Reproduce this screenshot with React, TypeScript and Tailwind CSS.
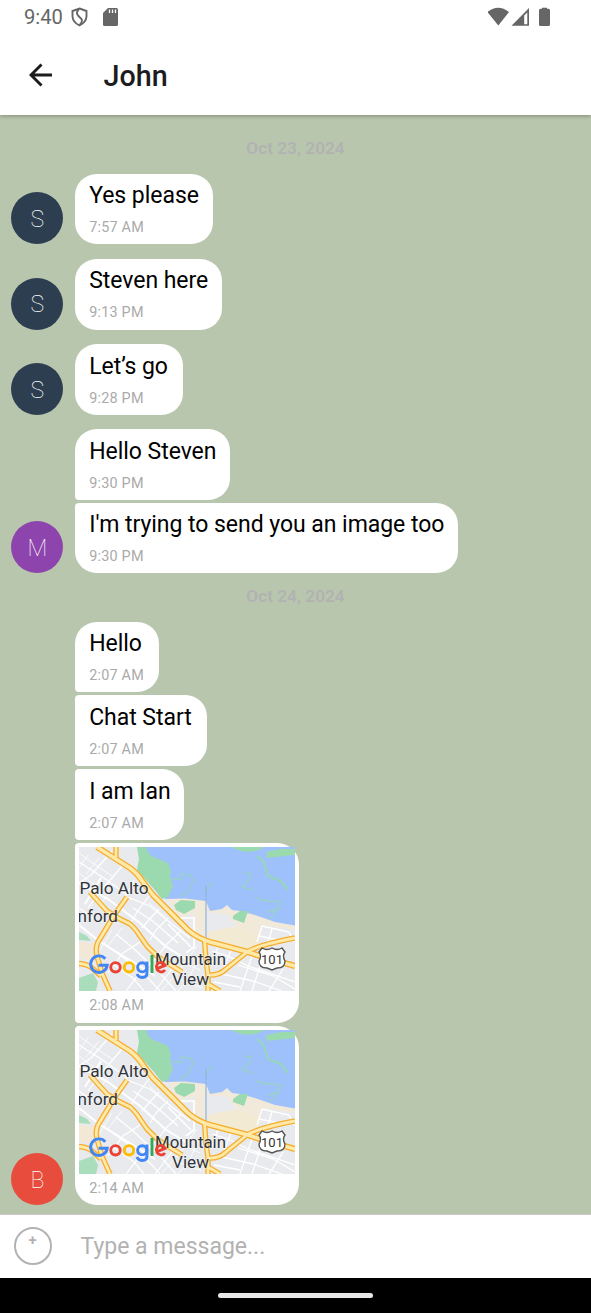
import React from "react";

const time = "text-[14.4px] leading-[17px] tracking-[0.22px] text-[#aaaaaa]";

function MapImage() {
  return (
    <svg viewBox="79 847 216 144" className="block h-[144px] w-[216px]" fontFamily="Roboto, sans-serif">
      <rect x="79" y="847" width="216" height="144" fill="#e8eaed" />
      <path d="M165 893L208 896L240 905L295 918V940L262 946L243 947L205 936L192 930L176 914Z" fill="#f1e9d9" />
      <path d="M208 931L232 927L262 934L258 944L243 951L210 941Z" fill="#f3ead3" />
      <path d="M79 942L98 944L97 962L79 958Z" fill="#f3e8d5" />
      <path d="M205 912L228 914L236 926L207 932ZM262 925L295 930V939L258 945ZM180 917L195 914V933L185 924Z" fill="#e8eaed" />
      <path d="M140 847H295V925.5L275 922L255 915L240 911L232 910L227 905L222 909L210 911L206 901L185 898.5L165 899L155 872Z" fill="#9fc1fb" />
      <path d="M137 847H146Q148 856 156 858L168 863L171 871L170 878L173 886L168 897L162 899L154 889L145 879L137 870L139 859Z" fill="#9bd9ae" />
      <path d="M174 905L181 900L195 901V908L184 914L176 910Z" fill="#9bd9ae" />
      <path d="M231 847Q248 856 263 848V847ZM266 852L281 849H295V855L267 858ZM233 916L240 911L248 911L244 923L233 919Z" fill="#9bd9ae" />
      <path d="M79 932L87 936L91 941L79 940ZM79 978L93 973L98 982L96 991H79Z" fill="#a9ddbb" />
      <g fill="none" stroke="#96d6bb" strokeWidth="2.2">
        <path d="M257 856L263 861L268 876L281 881L288 890" />
        <path d="M171 879H181V874L190 875L194 880L187 892L181 896M205 892L212 882M244 873L251 874L249 880L242 887L253 890M255 897L261 900L281 902L276 911L270 919M267 912L280 909" strokeWidth="1.3" strokeOpacity=".85" />
      </g>
      <path d="M206 898V940M206 897V886" stroke="#91b4da" strokeWidth="1.2" />
      <g fill="none" stroke="#fff" strokeWidth="2">
        <path d="M79 883L108 899L140 923L165 946L189 961M79 925L99 941L141 967L155 976M101 878L85 904" />
        <path d="M180 918H194V947L186 953M168 924L191 947" strokeWidth="1.7" />
      </g>
      <g fill="none" stroke="#fff" strokeWidth="1.2">
        <path d="M79 862L104 878L126 894M112 851L91 875L79 883M122 866L105 886L88 908M134 880L126 896M79 908L97 921M149 896L137 912L130 924M159 909L148 921L142 928M168 918L156 930L150 940M181 931L166 945L158 956M127 897L150 906L172 924L190 938M133 908L154 922L178 943M116 934L133 948L160 973L176 991M104 944L124 958L150 980L160 991M140 942L123 953L108 973M156 958L140 973L126 991M172 969L155 991M110 962L133 978L144 991" />
      </g>
      <g fill="none" stroke="#fff" strokeWidth=".8">
        <path d="M79 853L97 866L112 876M79 873L96 886M88 855L79 868M99 858L86 874M113 888L99 906M112 930L100 950M122 928L107 947M149 903L165 917M197 946L183 966L162 990M199 957L189 978L178 991M180 961L200 970M175 978L202 988" />
      </g>
      <g fill="none" stroke="#fff" strokeWidth="1.3">
        <path d="M262 926L289 932L294 942M262 926L257 942M272 929L268 942M259 936L284 941M212 951L228 956L248 966L295 982M218 947L211 966M231 950L224 968M252 956L240 991M262 960L252 991M283 969L269 991M222 974L253 981L282 991M238 965L273 976L295 989M214 982L240 987" />
      </g>
      {[["#f5ad2c", 5.4], ["#ffe9a8", 2.8]].map(([c, w]) => (
        <g key={c} fill="none" stroke={c} strokeWidth={w} strokeLinejoin="round">
          <path d="M116 847V857M90 892L97 900L107 911L118 918L130 924Q135 928 140 936L147 946L158 957L182 972M127 897L115 914L98 942Q95 948 97 956L102 973L110 991M79 963.5Q87 964 92 968L101 976M204.5 940L206 960L208 975V991M207 975Q219 976 226 969L247 952Q258 945 295 938M208 984L220 991" />
          <path d="M97 847L130 868Q137 873 143 882L153 895L175 917L188 930Q197 938 210 942L248 952L263 957L295 966" strokeWidth={Number(w) + 0.7} />
        </g>
      ))}
      <g fill="#30343a" fontSize="17.3" stroke="#fff" strokeWidth="1.5" paintOrder="stroke" strokeOpacity=".4">
        <text x="79.5" y="894" textLength="69" lengthAdjust="spacingAndGlyphs">Palo Alto</text>
        <text x="77.5" y="922" textLength="40.5" lengthAdjust="spacingAndGlyphs">nford</text>
        <text x="155" y="965" textLength="71" lengthAdjust="spacingAndGlyphs">Mountain</text>
        <text x="172" y="985" textLength="37" lengthAdjust="spacingAndGlyphs">View</text>
      </g>
      <path d="M262 948Q267 951 272 948Q277 951 282 948L285 952Q282 956 285 961Q285 968 277 968L272 970L267 968Q259 968 259 961Q262 956 259 952Z" fill="#fff" stroke="#555" strokeWidth="1.4" />
      <text x="272" y="964" textAnchor="middle" fontSize="13" fill="#333">101</text>
      <g fill="none" strokeWidth="2.9">
        <path d="M105.3 958.8A8.3 8.3 0 1 0 107.2 965.2H98.5" stroke="#4285f4" />
        <circle cx="115.5" cy="967.3" r="4.7" stroke="#ea4335" />
        <circle cx="129" cy="967.3" r="4.7" stroke="#fbbc04" />
        <path d="M147 961.5V973Q147 977.5 142 977.5Q138.5 977.5 137 974" stroke="#4285f4" />
        <circle cx="142.2" cy="967.3" r="4.6" stroke="#4285f4" />
        <path d="M152 955V973" stroke="#34a853" />
        <path d="M157 968.7L165 965.4Q163.5 962.4 160.5 962.4A4.8 4.8 0 1 0 165 970" stroke="#ea4335" />
      </g>
    </svg>
  );
}

type Msg = { text?: string; at: string; avatar?: string; color?: string; shape: string; width: string; gap: string };

const single = "rounded-[21.6px]";
const first = "rounded-[21.6px] rounded-bl-[4px]";
const middle = "rounded-[21.6px] rounded-l-[4px]";
const last = "rounded-[21.6px] rounded-tl-[4px]";

const oct23: Msg[] = [
  { text: "Yes please", at: "7:57 AM", avatar: "S", color: "bg-[#2c3e50]", shape: single, width: "w-[138.5px]", gap: "mb-[14.6px]" },
  { text: "Steven here", at: "9:13 PM", avatar: "S", color: "bg-[#2c3e50]", shape: single, width: "w-[147px]", gap: "mb-[14.6px]" },
  { text: "Let’s go", at: "9:28 PM", avatar: "S", color: "bg-[#2c3e50]", shape: single, width: "w-[107.8px]", gap: "mb-[14.6px]" },
  { text: "Hello Steven", at: "9:30 PM", shape: first, width: "w-[155.2px]", gap: "mb-[2.9px]" },
  { text: "I'm trying to send you an image too", at: "9:30 PM", avatar: "M", color: "bg-[#8e44ad]", shape: last, width: "w-[383.5px]", gap: "" },
];
const oct24: Msg[] = [
  { text: "Hello", at: "2:07 AM", shape: first, width: "w-[83.7px]", gap: "mb-[3.2px]" },
  { text: "Chat Start", at: "2:07 AM", shape: middle, width: "w-[131.7px]", gap: "mb-[3.2px]" },
  { text: "I am Ian", at: "2:07 AM", shape: middle, width: "w-[109px]", gap: "mb-[3px]" },
  { at: "2:08 AM", shape: middle, width: "w-[223.7px]", gap: "mb-[3px]" },
  { at: "2:14 AM", avatar: "B", color: "bg-[#e74c3c]", shape: last, width: "w-[223.7px]", gap: "" },
];

function Message({ m }: { m: Msg }) {
  return (
    <div className={`flex items-end pl-[11.4px] ${m.gap}`}>
      <div className="mr-[11.6px] w-[52px] shrink-0">
        {m.avatar && (
          <div className={`flex size-[52px] items-center justify-center rounded-full pt-[4px] text-[23px] font-thin text-white ${m.color}`}>{m.avatar}</div>
        )}
      </div>
      <div className={`bg-white ${m.shape} ${m.width}`}>
        {m.text ? (
          <div className="h-[70.6px] pl-[14.2px] pt-[7.5px]">
            <div className="whitespace-nowrap text-[23px] leading-[29px] tracking-[-0.04px] text-black">{m.text}</div>
            <div className={`mt-[9px] ${time}`}>{m.at}</div>
          </div>
        ) : (
          <div className="h-[179.8px] pl-[4px] pt-[4px]">
            <MapImage />
            <div className={`ml-[10.2px] mt-[6px] ${time}`}>{m.at}</div>
          </div>
        )}
      </div>
    </div>
  );
}

export default function App() {
  return (
    <div className="flex h-[1313px] w-[591px] flex-col overflow-hidden bg-[#b8c6ae] font-['Roboto',sans-serif]">
      <header className="z-10 h-[114.5px] shrink-0 bg-white shadow-[0_1px_4px_rgba(0,0,0,0.3)]">
        <div className="flex h-[34px] items-center justify-between pl-[24px] pr-[40px] text-[#666666]">
          <div className="flex items-center">
            <span className="w-[47px] text-[20.2px] leading-[34px]">9:40</span>
            <svg className="h-[20px] w-[17px]" viewBox="0 0 17 20" fill="none" stroke="currentColor" strokeWidth="1.9">
              <path d="M8.5 1.5L15.5 4V9.5Q15 15.5 8.5 18.5Q2 15.5 1.5 9.5V4Z" />
              <path d="M8 2Q4.5 5.5 7 8.5L10.5 12Q12 14.5 8.5 18" />
            </svg>
            <svg className="ml-[15px] h-[18px] w-[15px]" viewBox="0 0 15 18">
              <path d="M5 0H13.5Q15 0 15 1.5V16.5Q15 18 13.5 18H1.5Q0 18 0 16.5V5Z" fill="currentColor" />
              <path d="M6.5 1.5V5M9.5 1.5V5M12.5 1.5V5" stroke="white" strokeWidth="1.3" />
            </svg>
          </div>
          <svg className="mb-px h-[19px] w-[63px]" viewBox="488 7 63 19" fill="currentColor">
            <path d="M487.5 12Q498 3.5 509 12L498.3 25.5Z" />
            <path fillRule="evenodd" d="M511.5 25.8L529 8V25.8ZM524.2 15.5V24.3H527.3V12.5Z" />
            <path d="M542 8.8V7.8H547V8.8H548.5Q550 8.8 550 10.3V24.5Q550 26 548.5 26H540.5Q539 26 539 24.5V10.3Q539 8.8 540.5 8.8Z" />
          </svg>
        </div>
        <div className="flex h-[81px] items-center pl-[29px] text-[#1c1c1e]">
          <svg className="h-[24px] w-[24px]" viewBox="0 0 24 24" fill="none" stroke="currentColor" strokeWidth="2.9">
            <path d="M23 12H2.5M12.5 1.5L2 12L12.5 22.5" />
          </svg>
          <h1 className="ml-[50.5px] pt-[3px] text-[28.7px] font-medium leading-[34px]">John</h1>
        </div>
      </header>
      <main className="h-[1099px] shrink-0">
        <div className="h-[59.3px] pt-[22.8px] text-center text-[17.25px] font-semibold leading-[22px] text-[#b2b2b2]">Oct 23, 2024</div>
        {oct23.map((m, i) => <Message key={i} m={m} />)}
        <div className="h-[48.2px] pt-[11.2px] text-center text-[17.25px] font-semibold leading-[22px] text-[#b2b2b2]">Oct 24, 2024</div>
        {oct24.map((m, i) => <Message key={i} m={m} />)}
      </main>
      <div className="flex h-[64.5px] shrink-0 items-center border-t border-[#c8c8c8] bg-white pb-[1.5px] pl-[14px] text-[#b2b2b2]">
        <div className="flex size-[38px] justify-center rounded-full border-[2.6px] border-[#b2b2b2]">
          <span className="mr-[1px] text-[15px] font-bold leading-[22px]">+</span>
        </div>
        <span className="ml-[28.5px] pt-[2px] text-[23px] leading-[30px]">Type a message...</span>
      </div>
      <footer className="flex h-[35px] shrink-0 items-center justify-center bg-black">
        <div className="h-[5px] w-[155px] rounded-full bg-[#e6e6e6]" />
      </footer>
    </div>
  );
}
